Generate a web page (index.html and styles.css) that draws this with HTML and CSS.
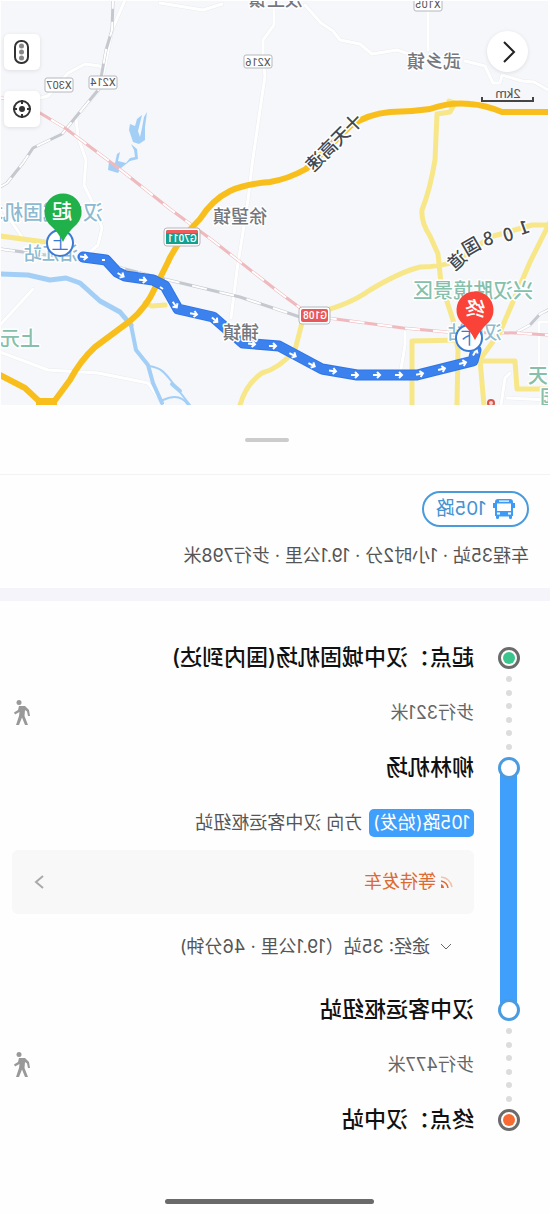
FILE: index.html
```html
<!DOCTYPE html>
<html lang="zh-CN">
<head>
    <meta charset="UTF-8">
    <meta name="viewport" content="width=device-width, initial-scale=1.0">
    <title>105路</title>
    <link rel="stylesheet" href="styles.css">
</head>
<body>
    <div class="screen">
        <div class="map">
            <svg class="map-canvas" viewBox="2 1 547 404">
                <rect width="550" height="406" fill="#f5f7fa"/>
                <!-- roads, water and rails -->
                <g transform="matrix(-1 0 0 1 550 0)" fill="none" stroke-linejoin="round" stroke-linecap="round">
                    <g stroke="#eaecef" stroke-width="4">
                        <path d="M125 0L112 30L105 65L100 88L76 118L78 137L86 160L84 185L96 210L102 228L98 245L90 252M160 3L203 10L222 4M274 0V25L263 40V60L265 76L260 110L252 165L248 200L237 270L231 318M305 5L321 23L333 31L340 40L360 44L372 54L397 50L415 56M428 10V50M465 61L485 66L493 83H500L502 75L522 81L534 82L550 91M40 98L48 96L68 73L85 64L100 66L104 70M0 352L48 370L98 373L148 383L164 405M0 325L33 289M0 205L22 237M405 332V345L400 375M550 322H539V375M501 405L505 378L510 373M507 398L550 400"/>
                        <path d="M125 0L112 30L105 65L100 88L76 118L78 137L86 160L84 185L96 210L102 228L98 245L90 252M160 3L203 10L222 4M274 0V25L263 40V60L265 76L260 110L252 165L248 200L237 270L231 318M305 5L321 23L333 31L340 40L360 44L372 54L397 50L415 56M428 10V50M465 61L485 66L493 83H500L502 75L522 81L534 82L550 91M40 98L48 96L68 73L85 64L100 66L104 70M0 352L48 370L98 373L148 383L164 405M0 325L33 289M0 205L22 237M405 332V345L400 375M550 322H539V375M501 405L505 378L510 373M507 398L550 400" stroke="#fff" stroke-width="3"/>
                    </g>
                    <g fill="#a3cff7">
                        <path d="M147 112L145 127L145 140L139 144L133 142L129 130L130 124L135 126L137 119L142 115L138 131L140 137L142 128L144 117Z"/>
                        <path d="M131 144L137 149L138 159L130 161L121 168L118 173L108 170L109 162L115 163L117 154L120 152L118 161L126 163L130 158L135 157L134 150Z"/>
                    </g>
                    <g stroke="#a3cff7">
                        <path d="M0 274L28 275L50 280L66 278L80 283L100 301L120 312L131 325" stroke-width="5"/>
                        <path d="M131 325L136 350L148 365L153 383L162 403" stroke-width="4"/>
                        <path d="M149 366C162 368 165 373 172 382L190 405M163 400Q180 392 188 405" stroke-width="2"/>
                        <path d="M172 384L180 391" stroke-width="4"/>
                    </g>
                    <g stroke="#c5c8ce" stroke-width="3" stroke-linecap="butt">
                        <path d="M0 187L7 183L23 163L33 148L62 134L75 118L99 89L106 50L112 30L113 0M0 249L100 262L125 269L160 278L240 297L303 318M517 332L530 325L540 314L550 309"/>
                        <path d="M0 187L7 183L23 163L33 148L62 134L75 118L99 89L106 50L112 30L113 0M0 249L100 262L125 269L160 278L240 297L303 318M517 332L530 325L540 314L550 309" stroke="#fff" stroke-width="2" stroke-dasharray="15 13"/>
                    </g>
                    <g stroke="#efb9bd" stroke-width="3" stroke-linecap="butt">
                        <path d="M0 98L10 99L40 113L65 128L77 137L117 167L170 209L212 240L280 293L303 310L328 318L403 328L447 332L517 333L550 335"/>
                        <path d="M0 98L10 99L40 113L65 128L77 137L117 167L170 209L212 240L280 293L303 310L328 318L403 328L447 332L517 333L550 335" stroke="#fff" stroke-width="2" stroke-dasharray="15 13"/>
                    </g>
                    <g stroke="#f7e788" stroke-width="5">
                        <path d="M0 236L45 242M437 114L435 160Q430 190 422 210Q421 222 430 236L438 254L441 283L453 320L458 350L457 405M550 222L530 262L500 332L481 358M550 225H532L490 237L457 261Q440 267 420 267Q400 272 370 290Q345 308 304 315L295 350Q280 368 262 373Q246 384 240 405M412 405V341L460 340M480 361H515L517 389H550M480 360L484 405M437 114L450 112L455 103L449 101M145 303L152 306L165 305"/>
                    </g>
                    <g stroke="#f8bf1c" stroke-width="6">
                        <path d="M550 112H502Q485 105 470 104Q450 102 430 109Q410 112 390 112Q368 114 350 126L306 169Q288 179 270 182Q245 184 230 191Q212 200 200 219Q176 243 168 262L155 288Q146 308 130 321L95 347Q80 361 70 380L53 403M0 375L25 388L42 404"/>
                        <path d="M36 398H57V405H36Z" fill="#f8bf1c" stroke="none"/>
                    </g>
                    <path d="M83 257L106 260L117 272L125 276L153 280L165 286L178 309L213 317L243 343L279 346L322 369L357 375H417L473 361L476 350" stroke="#2f74e6" stroke-width="11"/>
                    <path d="M83 257L106 260L117 272L125 276L153 280L165 286L178 309L213 317L243 343L279 346L322 369L357 375H417L473 361L476 350" stroke="#3c82ee" stroke-width="9"/>
                    <g stroke="#fff" stroke-width="2" stroke-linecap="butt" stroke-linejoin="miter">
                        <path d="M-4 0H3M0-3L3 0L0 3" transform="translate(84 257) rotate(8)"/>
                        <path d="M-4 0H3M0-3L3 0L0 3" transform="translate(121 275) rotate(30)"/>
                        <path d="M-4 0H3M0-3L3 0L0 3" transform="translate(143 280) rotate(5)"/>
                        <path d="M-4 0H3M0-3L3 0L0 3" transform="translate(175 305) rotate(55)"/>
                        <path d="M-4 0H3M0-3L3 0L0 3" transform="translate(194 314) rotate(10)"/>
                        <path d="M-4 0H3M0-3L3 0L0 3" transform="translate(215 320) rotate(40)"/>
                        <path d="M-4 0H3M0-3L3 0L0 3" transform="translate(252 344) rotate(8)"/>
                        <path d="M-4 0H3M0-3L3 0L0 3" transform="translate(273 346)"/>
                        <path d="M-4 0H3M0-3L3 0L0 3" transform="translate(293 355) rotate(27)"/>
                        <path d="M-4 0H3M0-3L3 0L0 3" transform="translate(312 365) rotate(27)"/>
                        <path d="M-4 0H3M0-3L3 0L0 3" transform="translate(333 371) rotate(8)"/>
                        <path d="M-4 0H3M0-3L3 0L0 3" transform="translate(355 375)"/>
                        <path d="M-4 0H3M0-3L3 0L0 3" transform="translate(377 375)"/>
                        <path d="M-4 0H3M0-3L3 0L0 3" transform="translate(399 375)"/>
                        <path d="M-4 0H3M0-3L3 0L0 3" transform="translate(420 374) rotate(-12)"/>
                        <path d="M-4 0H3M0-3L3 0L0 3" transform="translate(442 369) rotate(-14)"/>
                        <path d="M-4 0H3M0-3L3 0L0 3" transform="translate(463 363) rotate(-14)"/>
                        <path d="M-4 0H3M0-3L3 0L0 3" transform="translate(475 352) rotate(-60)"/>
                        <path d="M102 260H105M160 287L163 289"/>
                    </g>
                    <circle cx="491" cy="403" r="3" fill="#f5d6d3" stroke="#d9534a" stroke-width="2"/>
                </g>
                <!-- place names -->
                <g class="place">
                    <text x="247" y="6">汉王镇</text>
                    <text x="89" y="68">武乡镇</text>
                    <text x="283" y="223">徐望镇</text>
                    <text x="291" y="339">铺镇</text>
                </g>
                <g class="spot">
                    <text x="17" y="298">兴汉胜境景区</text>
                    <text x="510" y="346">上元</text>
                    <text x="2" y="383">天</text>
                    <text x="-10" y="405">园</text>
                </g>
                <g class="station">
                    <text x="48" y="339">汉中站</text>
                    <text x="472" y="260">洎江站</text>
                    <text x="447" y="220">汉中城固机场</text>
                </g>
                <g class="road-name">
                    <text transform="translate(197 123) rotate(45)" x="-9" y="7">十天高速</text>
                    <text transform="translate(26 227) rotate(20)" x="-5" y="7">1</text>
                    <text transform="translate(42 234) rotate(15)" x="-5" y="7">0</text>
                    <text transform="translate(62 238) rotate(10)" x="-5" y="7">8</text>
                    <text transform="translate(79 246) rotate(30)" x="-9" y="7">国</text>
                    <text transform="translate(93 260) rotate(42)" x="-9" y="7">道</text>
                </g>
                <!-- road shields -->
                <g class="shield">
                    <rect x="108" y="-4" width="28" height="15" rx="2"/>
                    <text x="122" y="8">X105</text>
                    <rect x="278" y="55" width="28" height="13" rx="2"/>
                    <text x="292" y="66">X216</text>
                    <rect x="433" y="76" width="28" height="13" rx="2"/>
                    <text x="447" y="86">X214</text>
                    <rect x="477" y="78" width="28" height="14" rx="2"/>
                    <text x="491" y="89">X307</text>
                </g>
                <g class="shield shield-main">
                    <rect x="350" y="228" width="36" height="18" rx="3"/>
                    <path d="M352 232Q352 230 354 230H382Q384 230 384 232V244H352Z" fill="#13a08d"/>
                    <path d="M352 232Q352 230 354 230H382Q384 230 384 232V233H352Z" fill="#ee5b5b"/>
                    <text x="368" y="242">G7011</text>
                    <rect x="220" y="307" width="31" height="17" rx="3"/>
                    <path d="M222 311Q222 309 224 309H247Q249 309 249 311V320Q249 322 247 322H224Q222 322 222 320Z" fill="#e85858"/>
                    <text x="235" y="319">G108</text>
                </g>
                <!-- boarding and alighting points -->
                <g class="point">
                    <circle cx="490" cy="243" r="13"/>
                    <text x="490" y="249">上</text>
                    <circle cx="81" cy="338" r="13"/>
                    <text x="81" y="344">下</text>
                </g>
                <g class="pin">
                    <path d="M487 242Q483 233 473 224A18.500 18.500 0 1 1 501 224Q491 233 487 242Z" fill="#21b14b"/>
                    <text x="488" y="219">起</text>
                    <path d="M75 340Q70 330 61 322A18.500 18.500 0 1 1 89 322Q80 330 75 340Z" fill="#fa4338"/>
                    <text x="75" y="316" transform="rotate(-8 75 310)">终</text>
                </g>
                <g class="scale">
                    <path d="M17 97V101H68V97"/>
                    <text x="42" y="98">2km</text>
                </g>
            </svg>
            <button class="back" type="button" aria-label="返回">
                <svg width="41" height="41" viewBox="0 0 41 41"><path d="M24 11L14 21L24 31"/></svg>
            </button>
            <div class="tools">
                <button class="tool" type="button" aria-label="路况">
                    <svg width="36" height="36" viewBox="0 0 36 36">
                        <rect x="12" y="7" width="13" height="22" rx="6" fill="none" stroke="#333" stroke-width="2"/>
                        <g fill="#888"><circle cx="18.500" cy="12" r="2.500"/><circle cx="18.500" cy="18" r="2.500"/><circle cx="18.500" cy="24" r="2.500"/></g>
                    </svg>
                </button>
                <button class="tool" type="button" aria-label="定位">
                    <svg width="36" height="36" viewBox="0 0 36 36" fill="none" stroke="#333" stroke-width="2">
                        <circle cx="18" cy="18" r="8"/>
                        <path d="M18 9V13M18 23V27M9 18H13M23 18H27"/>
                        <circle cx="18" cy="18" r="3" fill="#333" stroke="none"/>
                    </svg>
                </button>
            </div>
        </div>

        <div class="handle"><span class="handle-bar"></span></div>

        <div class="summary">
            <div class="line-tag">
                <svg width="22" height="20" viewBox="0 0 22 20" fill="#3d9bf5">
                    <path fill-rule="evenodd" d="M5 0H17Q20 0 20 3V17H19V19Q19 20 17.500 20Q16 20 16 19V17.500H6V19Q6 20 4.500 20Q3 20 3 19V17H2V3Q2 0 5 0ZM6 1.500V2.800H16V1.500ZM4 4.500V12H18V4.500ZM4 13.500V15.500H7V13.500ZM15 13.500V15.500H18V13.500Z"/>
                    <path d="M0 4H2V9H0ZM20 4H22V9H20Z"/>
                </svg>
                <span>105路</span>
            </div>
            <p class="trip">车程35站 · 1小时2分 · 19.1公里 · 步行798米</p>
        </div>

        <div class="route">
            <section class="leg">
                <div class="rail">
                    <span class="node node-start"></span>
                    <span class="dots"><i></i><i></i><i></i><i></i><i></i><i></i></span>
                </div>
                <div class="steps">
                    <h2 class="stop">起点：汉中城固机场(国内到达)</h2>
                    <div class="walk">
                        <span>步行321米</span>
                        <svg class="walker" width="18" height="26" viewBox="0 0 18 26"><circle cx="12" cy="2.500" r="2.500"/><path d="M6 6H12L13 10L17 12.500L16 14.500L11.500 12L12 16L15 25H12L9 17.500L6 25H3L6.500 16L6 10L4 11.500L3 16H1L2 10Z"/></svg>
                    </div>
                </div>
            </section>

            <section class="leg">
                <div class="rail">
                    <span class="node node-bus"></span>
                    <span class="track"></span>
                </div>
                <div class="steps">
                    <h2 class="stop">柳林机场</h2>
                    <div class="direction"><span class="badge">105路(始发)</span><span>方向 汉中客运枢纽站</span></div>
                    <button class="status" type="button">
                        <svg width="12" height="12" viewBox="0 0 12 12" fill="none" stroke="#dd6a30"><path d="M12 1Q3 2 1 11" stroke="#f0c4ac" stroke-width="1.500"/><path d="M12 5Q6 6 5 12" stroke-width="1.500"/><path d="M12 8Q9 9 9 12H12Z" fill="#dd6a30" stroke="none"/></svg>
                        <span>等待发车</span>
                        <svg class="status-more" width="10" height="16" viewBox="0 0 10 16"><path d="M1 2L8 8L1 14"/></svg>
                    </button>
                    <button class="via" type="button">
                        <svg width="12" height="8" viewBox="0 0 12 8"><path d="M1 1L6 6L11 1"/></svg>
                        <span>途经: 35站（19.1公里 · 46分钟)</span>
                    </button>
                </div>
            </section>

            <section class="leg">
                <div class="rail">
                    <span class="node node-bus"></span>
                    <span class="dots"><i></i><i></i><i></i><i></i><i></i><i></i></span>
                </div>
                <div class="steps">
                    <h2 class="stop">汉中客运枢纽站</h2>
                    <div class="walk">
                        <span>步行477米</span>
                        <svg class="walker" width="18" height="26" viewBox="0 0 18 26"><circle cx="12" cy="2.500" r="2.500"/><path d="M6 6H12L13 10L17 12.500L16 14.500L11.500 12L12 16L15 25H12L9 17.500L6 25H3L6.500 16L6 10L4 11.500L3 16H1L2 10Z"/></svg>
                    </div>
                </div>
            </section>

            <section class="leg">
                <div class="rail"><span class="node node-end"></span></div>
                <div class="steps">
                    <h2 class="stop">终点：汉中站</h2>
                </div>
            </section>
        </div>

        <div class="home"><span class="home-bar"></span></div>
    </div>
</body>
</html>
```
FILE: styles.css
```css
* {
    box-sizing: border-box;
}
body {
    margin: 0;
    background-color: #fefefe;
    font-family: Inter, "Noto Sans CJK SC", sans-serif;
    font-size: 18px;
    line-height: 28px;
    color: #555;
}
/* the whole screen is shown mirrored */
.screen {
    transform: scaleX(-1);
}
button {
    font: inherit;
    color: inherit;
    border: none;
    padding: 0;
    cursor: pointer;
}
svg {
    display: block;
}

/* map */
.map {
    position: relative;
    padding: 1px 1px 0 2px;
}
.map-canvas {
    width: 100%;
    height: auto;
}
.map-canvas text {
    font-family: "Noto Sans CJK SC", sans-serif;
}
.place text,
.spot text,
.station text,
.road-name text {
    font-size: 18px;
    font-weight: 500;
    stroke: #fff;
    stroke-width: 3px;
    stroke-linejoin: round;
    paint-order: stroke;
}
.place text {
    fill: #74787e;
}
.spot text {
    fill: #86c0ab;
}
.station text {
    fill: #8dbad0;
}
.spot text,
.station text:last-child {
    font-size: 20px;
}
.road-name text {
    fill: #44484e;
}
.shield rect {
    fill: #fff;
    stroke: #b5b8bd;
}
.map-canvas .shield text {
    font-family: Roboto, sans-serif;
    font-size: 11px;
    text-anchor: middle;
    fill: #555;
}
.map-canvas .shield-main text {
    font-size: 10px;
    font-weight: 500;
    fill: #fff;
}
.point circle {
    fill: #fff;
    stroke: #3a7bd5;
    stroke-width: 2px;
}
.point text {
    font-size: 17px;
    text-anchor: middle;
    fill: #3a7bd5;
}
.pin text {
    font-size: 20px;
    font-weight: 500;
    text-anchor: middle;
    fill: #fff;
}
.scale path {
    fill: none;
    stroke: #444;
    stroke-width: 2px;
}
.map-canvas .scale text {
    font-family: Roboto, sans-serif;
    font-size: 13px;
    text-anchor: middle;
    fill: #555;
}
.back {
    position: absolute;
    top: 31px;
    left: 22px;
    border-radius: 50%;
    background-color: #fff;
    box-shadow: 0 1px 4px rgba(0, 0, 0, 0.1);
}
.back path {
    fill: none;
    stroke: #222;
    stroke-width: 2px;
}
.tools {
    position: absolute;
    top: 34px;
    right: 4px;
    display: flex;
    flex-direction: column;
    gap: 21px;
}
.tool {
    border-radius: 5px;
    background-color: #fff;
    box-shadow: 0 1px 4px rgba(0, 0, 0, 0.1);
}

/* sheet */
.handle {
    display: flex;
    justify-content: center;
    padding: 33px 0 32px 16px;
    border-bottom: 1px solid #f3f3f5;
}
.handle-bar {
    width: 44px;
    height: 4px;
    border-radius: 2px;
    background-color: #ccc;
}
.summary {
    padding: 16px 21px 18px;
    border-bottom: 13px solid #f4f4fa;
}
.line-tag {
    display: inline-flex;
    align-items: center;
    gap: 7px;
    height: 36px;
    padding: 0 12px;
    border: 2px solid #4a9bdc;
    border-radius: 18px;
    font-size: 19px;
    color: #4593d2;
}
.line-tag svg {
    flex: none;
}
.trip {
    margin: 15px 0 0;
}

/* timeline */
.route {
    padding: 29px 12px 0 15px;
}
.leg {
    display: flex;
    gap: 9px;
}
.rail {
    display: flex;
    flex-direction: column;
    align-items: center;
    width: 52px;
    padding-top: 17px;
    margin-bottom: -17px;
}
.node {
    position: relative;
    z-index: 1;
    flex: none;
    width: 22px;
    height: 22px;
    border: 3px solid #4a9be0;
    border-radius: 50%;
    background-color: #fff;
}
.node-start,
.node-end {
    padding: 2px;
    border-color: #6b6b6b;
    background-clip: content-box;
}
.node-start {
    background-color: #3cc48d;
}
.node-end {
    background-color: #f76b32;
}
.dots {
    flex: 1;
    display: flex;
    flex-direction: column;
    align-items: center;
    justify-content: space-between;
    padding: 7px 0;
}
.dots i {
    width: 6px;
    height: 6px;
    border-radius: 50%;
    background-color: #dcdcdc;
}
.track {
    flex: 1;
    width: 17px;
    margin: -8px 0;
    background-color: #3f9ffb;
}
.steps {
    flex: 1;
    min-width: 0;
}
.stop {
    margin: 0;
    font-size: 22px;
    font-weight: 500;
    line-height: 55px;
    color: #111;
}
.walk,
.direction {
    display: flex;
    align-items: center;
    height: 55px;
}
.walk {
    justify-content: space-between;
    padding-right: 1px;
    color: #666;
}
.walker {
    fill: #999;
}
.direction {
    gap: 7px;
}
.badge {
    padding: 0 4px;
    border-radius: 5px;
    background-color: #3f9ffb;
    color: #fff;
}
.status {
    display: flex;
    align-items: center;
    gap: 5px;
    width: 100%;
    height: 64px;
    padding: 0 22px 0 21px;
    border-radius: 6px;
    background-color: #f8f8f8;
    color: #dd6a30;
}
.status-more {
    margin-left: auto;
}
.status-more path,
.via path {
    fill: none;
    stroke: #aaa;
    stroke-width: 2px;
}
.via {
    display: flex;
    align-items: center;
    gap: 10px;
    height: 66px;
    margin-bottom: 2px;
    padding-left: 22px;
    background: none;
}
.via path {
    stroke: #666;
    stroke-width: 1px;
}

.home {
    display: flex;
    justify-content: center;
    padding: 52px 0 9px 11px;
}
.home-bar {
    width: 209px;
    height: 5px;
    border-radius: 3px;
    background-color: #6a6a6a;
}
```
